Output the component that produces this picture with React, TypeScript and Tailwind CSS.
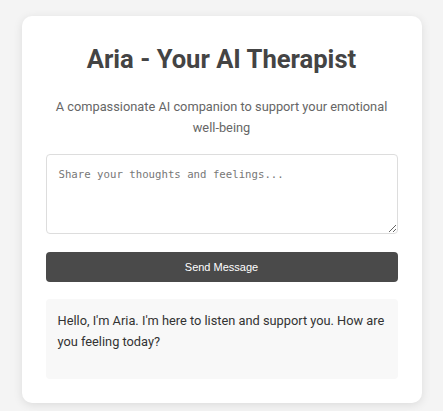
export default function App() {
  return (
    <div className="min-h-screen bg-[#f4f4f4] pt-4 pb-4 font-['Roboto',sans-serif]">
      <div className="mx-auto w-[400px] rounded-[10px] bg-white p-6 shadow-[0_2px_10px_rgba(0,0,0,0.1)]">
        <h1 className="pt-[2px] text-center text-[25.6px] font-bold leading-[34px] text-[#444]">
          Aria - Your AI Therapist
        </h1>
        <p className="mt-[20px] text-center text-[12.8px] leading-[21px] text-[#666]">
          A compassionate AI companion to support your emotional well-being
        </p>
        <textarea
          placeholder="Share your thoughts and feelings..."
          className="mt-[16px] block h-[80px] w-full rounded border border-[#ddd] p-3 font-['DejaVu_Sans_Mono',monospace] text-[10.7px] placeholder:text-[#777]"
        />
        <button className="mt-[18px] block h-[30px] w-full rounded bg-[#4a4a4a] font-['Liberation_Sans',Arial,sans-serif] text-[11px] text-white">
          Send Message
        </button>
        <div className="mt-[17px] min-h-[80px] rounded bg-[#f8f8f8] px-3 pt-[11px] pb-3 text-[12.8px] leading-[21px] text-[#333]">
          Hello, I'm Aria. I'm here to listen and support you. How are you feeling today?
        </div>
      </div>
    </div>
  );
}
